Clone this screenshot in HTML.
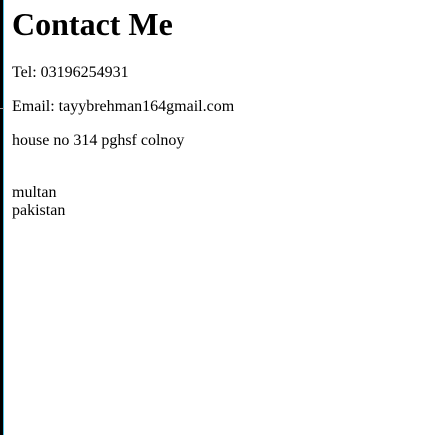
<!DOCTYPE html>
<html><head><style>
html,body{margin:0;height:435px;overflow:hidden;background:#fff}
body{font-family:"Liberation Serif",serif;font-size:16px;color:#000;}
.bar{position:absolute;left:0;top:0;width:3px;height:435px;background:#000}
.bar2{position:absolute;left:3px;top:0;width:1px;height:435px;background:#4fc3e8}
.gm{position:absolute;left:0;top:108px;width:4px;height:1px;background:#999}
.c{position:absolute;left:12px;top:6px}
h1{font-size:32px;font-weight:bold;margin:0 0 21px;line-height:37px}
p{margin:0 0 16px;line-height:18px}
</style></head><body>
<div class="bar"></div><div class="bar2"></div><div class="gm"></div>
<div class="c">
<h1>Contact Me</h1>
<p>Tel: 03196254931</p>
<p>Email: tayybrehman164gmail.com</p>
<p>house no 314 pghsf colnoy</p>
<p><br>multan<br>pakistan</p>
</div>
</body></html>
